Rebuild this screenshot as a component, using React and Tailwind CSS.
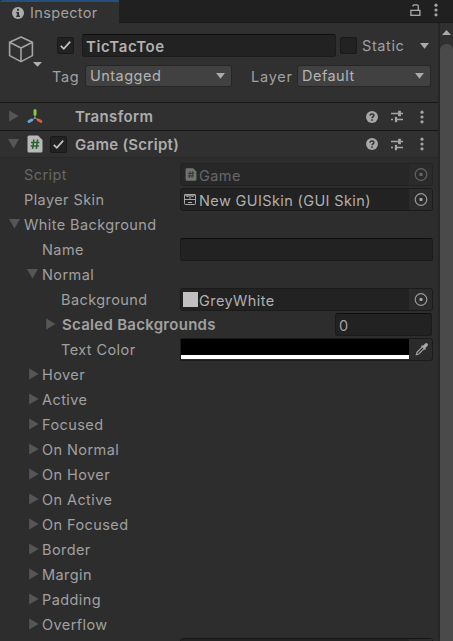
const Right = ({ className = "text-[#565656]" }) => (
  <svg className={`block h-[12px] w-[10px] shrink-0 ${className}`} viewBox="0 0 10 12">
    <path d="M0.2 0.6 L9.6 6 L0.2 11.4Z" fill="currentColor" />
  </svg>
);

const Down = ({ className = "h-[10px] w-[11px] text-[#565656]" }) => (
  <svg className={`block shrink-0 ${className}`} viewBox="0 0 10 10" preserveAspectRatio="none">
    <path d="M0 0 H10 L5 9.5Z" fill="currentColor" />
  </svg>
);

const Kebab = ({ className = "" }) => (
  <svg className={`block h-[14px] w-[4px] shrink-0 ${className}`} viewBox="0 0 4 14" fill="#a4a4a4">
    <circle cx="2" cy="2.2" r="1.6" />
    <circle cx="2" cy="7" r="1.6" />
    <circle cx="2" cy="11.8" r="1.6" />
  </svg>
);

const Check = ({ checked }) => (
  <span className="flex size-[17px] shrink-0 items-center justify-center rounded-[2px] border border-[#191919] bg-[#222222]">
    {checked && (
      <svg className="block size-[15px]" viewBox="0 0 15 15">
        <path d="M2.8 7.8 L5.8 10.8 L12.2 3.6" fill="none" stroke="#c4c4c4" strokeWidth="1.7" />
      </svg>
    )}
  </span>
);

const Target = () => (
  <span className="flex h-full w-[23px] shrink-0 items-center justify-center rounded-r-[2px] bg-[#2b2b2b]">
    <svg className="block size-[14px]" viewBox="0 0 14 14">
      <circle cx="7" cy="6.5" r="5.8" fill="none" stroke="#999" strokeWidth="1.2" />
      <rect x="5.5" y="5" width="3" height="3" rx="0.8" fill="#a8a8a8" />
    </svg>
  </span>
);

const ScriptIcon = ({ className }) => (
  <svg className={`block shrink-0 ${className}`} viewBox="0 0 16 18">
    <path d="M2 0.5 H11 L15.5 5 V16 Q15.5 17.5 14 17.5 H2 Q0.5 17.5 0.5 16 V2 Q0.5 0.5 2 0.5Z" fill="#b8b8b8" />
    <path d="M6.9 4.4 L5.6 13.8 M10.6 4.4 L9.3 13.8 M4 7.4 H12.4 M3.6 10.9 H12" stroke="#2c6130" strokeWidth="1.5" fill="none" />
  </svg>
);

const SkinIcon = () => (
  <svg className="block h-[13px] w-[12px] shrink-0" viewBox="0 0 12 13" fill="none" stroke="#a8a8a8" strokeWidth="1">
    <rect x="0.5" y="1.5" width="11" height="10" rx="0.8" />
    <path d="M0.5 6.5 H11.5 M4 9.5 H8" />
    <path d="M2.5 3.5 H4.5 M7.5 3.5 H9.5" />
    <path d="M6 1.5 V6.5" />
    <path d="M0.5 2 H11.5" strokeWidth="1.4" />
  </svg>
);

const Axes = () => (
  <svg className="block size-[18px] shrink-0" viewBox="0 0 18 18" strokeLinecap="round" strokeWidth="3">
    <path d="M9 2.6 V6.2" stroke="#8cc63c" />
    <path d="M5.6 12 L3 13.5" stroke="#5eaed2" />
    <path d="M12.4 12 L15 13.5" stroke="#dc5a2c" />
    <path d="M9 7.4 V10 L6.4 11.6 M9 10 L11.8 11.6" stroke="#a0a0a0" strokeWidth="1" fill="none" />
  </svg>
);

const HeaderTools = () => (
  <span className="ml-auto flex items-center pr-[14px]">
    <span className="flex size-[12px] items-center justify-center rounded-full bg-[#a6a6a6]">
      <svg className="block size-[12px]" viewBox="0 0 12 12">
        <path d="M4.1 4.8 Q4.1 3 6 3 Q7.9 3 7.9 4.6 Q7.9 5.5 6.8 6 Q6 6.4 6 7.2" fill="none" stroke="#303030" strokeWidth="1.4" />
        <rect x="5.2" y="8.3" width="1.6" height="1.5" fill="#303030" />
      </svg>
    </span>
    <svg className="ml-[13px] block h-[13px] w-[12px]" viewBox="0 0 12 13" stroke="#a6a6a6" fill="none">
      <path d="M0 3.5 H7 M10 3.5 H12 M0 9.5 H2 M5 9.5 H12" strokeWidth="1.3" />
      <path d="M8.5 0.8 V6.2" strokeWidth="2.8" />
      <path d="M5 6.9 V12.2" strokeWidth="2.2" />
    </svg>
    <Kebab className="ml-[17px]" />
  </span>
);

const Label = ({ children, className = "" }) => (
  <span className={`whitespace-nowrap text-[14.5px] leading-[23px] tracking-[0.42px] text-[#a0a0a0] ${className}`}>{children}</span>
);

const Row = ({ indent, arrow, label, bold, children }) => (
  <div className="flex h-[25px]">
    <div className={`flex h-[23px] w-[180px] shrink-0 items-center ${indent}`}>
      <span className="flex w-[14px] shrink-0 items-center pb-px">
        {arrow === "down" && <Down className="-ml-px h-[10px] w-[11px] text-[#565656]" />}
        {arrow === "right" && <Right className="ml-px text-[#565656]" />}
      </span>
      <Label className={bold ? "pl-[3px] font-semibold !text-[15px] !tracking-[0.28px]" : ""}>{label}</Label>
    </div>
    {children}
  </div>
);

const ObjectField = ({ children }) => (
  <div className="flex h-[23px] w-[253px] items-center rounded-[3px] border border-[#1b1b1b] bg-[#222222] pl-[2px]">
    {children}
    <span className="ml-auto h-full"><Target /></span>
  </div>
);

const Dropdown = ({ children, className }) => (
  <div className={`flex h-[22px] items-center rounded-[3px] border border-[#262626] bg-[#414141] pl-[4px] pr-[6px] ${className}`}>
    <span className="pb-px text-[14.5px] leading-[19px] tracking-[0.48px] text-[#b4b4b4]">{children}</span>
    <Down className="ml-auto h-[6px] w-[9px] text-[#aaaaaa]" />
  </div>
);

const closed = ["Hover", "Active", "Focused", "On Normal", "On Hover", "On Active", "On Focused", "Border", "Margin", "Padding", "Overflow"];

export default function App() {
  return (
    <div className="flex h-[641px] w-[453px] flex-col overflow-hidden bg-[#2d2d2d] font-['Inter',sans-serif]">
      <div className="flex h-[23px] shrink-0 bg-[#202020]">
        <div className="flex w-[119px] items-center rounded-tl-[2px] border-t-2 border-[#26507c] bg-[#303030] pl-[12px]">
          <svg className="block size-[12px]" viewBox="0 0 12 12">
            <circle cx="6" cy="6" r="6" fill="#acacac" />
            <path d="M5 1.8 H7 V3.7 H5Z M4.2 4.9 H7 V8.6 H8 V10 H4.2 V8.6 H5.1 V6.2 H4.2Z" fill="#303030" />
          </svg>
          <span className="ml-[6px] text-[14.5px] leading-[20px] tracking-[0.35px] text-[#a0a0a0]">Inspector</span>
        </div>
        <div className="flex flex-1 items-start justify-end border-b border-[#191919] pr-[15px] pt-[3px]">
          <svg className="mr-[13px] mt-px block h-[12px] w-[11px]" viewBox="0 0 11 12" fill="none" stroke="#acacac" strokeWidth="1.3">
            <rect x="0.9" y="6.4" width="9" height="4.9" />
            <path d="M3 2.4 V2 Q3 0.9 4.1 0.9 H7 Q8.3 0.9 8.3 2.2 V6" />
          </svg>
          <Kebab />
        </div>
      </div>
      <div className="flex min-h-0 flex-1">
        <div className="flex w-[438px] shrink-0 flex-col">
          <div className="flex h-[79px] shrink-0 bg-[#303030]">
            <div className="flex w-[57px] shrink-0 items-start pl-[8px] pt-[13px]">
              <svg className="block h-[27px] w-[26px]" viewBox="0 0 26 27" fill="none" stroke="#a4a4a4" strokeWidth="1.6" strokeLinejoin="round">
                <path d="M13 1 L24.4 6.2 V19.6 L13 25.6 L1.6 19.6 V6.2Z M1.6 6.2 L13 12 L24.4 6.2 M13 12 V25.6" />
              </svg>
              <Down className="-ml-px mt-[26px] h-[5px] w-[9px] text-[#b0b0b0]" />
            </div>
            <div className="flex flex-1 flex-col pt-[11px]">
              <div className="flex h-[23px] items-center">
                <Check checked />
                <div className="ml-[8px] flex h-[23px] w-[254px] items-center rounded-[3px] border border-[#1c1c1c] border-t-[#0f0f0f] bg-[#222222] pl-[3px]">
                  <span className="pt-[2px] text-[15px] font-semibold leading-[21px] tracking-[0.64px] text-[#b0b0b0]">TicTacToe</span>
                </div>
                <span className="ml-[4px]"><Check /></span>
                <Label className="ml-[5px] !tracking-[0.6px]">Static</Label>
                <Down className="ml-auto mr-[9px] h-[6px] w-[9px] text-[#aaaaaa]" />
              </div>
              <div className="-ml-[4px] mt-[8px] flex h-[22px] items-center">
                <Label className="-ml-px w-[33px] !tracking-[0.7px]">Tag</Label>
                <Dropdown className="w-[147px]">Untagged</Dropdown>
                <Label className="ml-[19px] w-[46px] !tracking-[0.75px]">Layer</Label>
                <Dropdown className="w-[134px]">Default</Dropdown>
              </div>
            </div>
          </div>
          <div className="flex h-[28px] shrink-0 items-center border-t border-[#181818] bg-[#303030] pl-[9px]">
            <Right className="mb-px text-[#565656]" />
            <span className="ml-[7px]"><Axes /></span>
            <Label className="ml-[31px] font-semibold !text-[15px] !tracking-[0.35px] !text-[#acacac]">Transform</Label>
            <HeaderTools />
          </div>
          <div className="flex h-[28px] shrink-0 items-center border-y border-b-[#282828] border-t-[#181818] bg-[#303030] pl-[8px]">
            <Down />
            <ScriptIcon className="ml-[8px] h-[18px] w-[16px]" />
            <span className="ml-[7px]"><Check checked /></span>
            <Label className="ml-[8px] pt-px font-semibold !text-[15px] !tracking-[0.28px] !text-[#acacac]">Game (Script)</Label>
            <HeaderTools />
          </div>
          <div className="flex flex-col pt-[5px]">
            <div className="opacity-50">
              <Row indent="pl-[10px]" label="Script">
                <ObjectField>
                  <ScriptIcon className="ml-[2px] h-[13px] w-[12px]" />
                  <Label className="ml-[2px] pt-[2px]">Game</Label>
                </ObjectField>
              </Row>
            </div>
            <Row indent="pl-[10px]" label="Player Skin">
              <ObjectField>
                <span className="ml-px"><SkinIcon /></span>
                <Label className="ml-[3px] pt-[2px] !tracking-[0.38px] !text-[#b0b0b0]">New GUISkin (GUI Skin)</Label>
              </ObjectField>
            </Row>
            <Row indent="pl-[10px]" arrow="down" label="White Background" />
            <Row indent="pl-[28px]" label="Name">
              <div className="h-[23px] w-[253px] rounded-[3px] border border-[#1b1b1b] border-t-[#0f0f0f] bg-[#222222]" />
            </Row>
            <Row indent="pl-[28px]" arrow="down" label="Normal" />
            <Row indent="pl-[47px]" label="Background">
              <ObjectField>
                <span className="size-[15px] bg-[#c0c0c0]" />
                <Label className="ml-px pt-[2px] !text-[#b0b0b0]">GreyWhite</Label>
              </ObjectField>
            </Row>
            <Row indent="pl-[45px]" arrow="right" bold label="Scaled Backgrounds">
              <div className="ml-[155px] flex h-[23px] w-[97px] items-center rounded-[3px] border border-[#1b1b1b] border-t-[#0f0f0f] bg-[#222222] pl-[3px]">
                <Label className="pt-[2px]">0</Label>
              </div>
            </Row>
            <Row indent="pl-[47px]" label="Text Color">
              <div className="flex h-[23px] w-[253px] rounded-r-[3px] border border-[#1b1b1b] bg-[#2b2b2b]">
                <div className="flex h-[20px] w-[228px] flex-col bg-black">
                  <div className="mt-auto h-[4px] bg-white" />
                </div>
                <svg className="ml-[5px] mt-[3px] block size-[15px]" viewBox="0 0 15 15">
                  <path d="M8.2 5.2 L3 10.4 L2.4 12.7 L4.7 12 L9.9 6.8" fill="none" stroke="#a4a4a4" strokeWidth="1.2" />
                  <path d="M9 3.8 L11.2 1.6 Q12.4 0.6 13.5 1.7 Q14.5 2.7 13.5 3.9 L11.3 6 L12 6.9 L10.9 8 L7 4.2 L8.1 3Z" fill="#a8a8a8" />
                </svg>
              </div>
            </Row>
            {closed.map((name) => (
              <Row key={name} indent="pl-[28px]" arrow="right" label={name} />
            ))}
            <div className="ml-[180px] flex h-[23px] w-[253px] shrink-0 justify-end rounded-[3px] border border-[#171717] bg-[#222222]">
              <div className="w-[23px] bg-[#2b2b2b]" />
            </div>
          </div>
        </div>
        <div className="flex flex-1 flex-col border-l-2 border-[#262626] bg-[#303030]">
          <svg className="ml-[2px] mt-[7px] block h-[5px] w-[9px] shrink-0" viewBox="0 0 9 5">
            <path d="M0 5 L4.5 0 L9 5Z" fill="#aaaaaa" />
          </svg>
          <div className="mt-[9px] flex-1 rounded-t-[6px] bg-[#4a4a4a]" />
        </div>
      </div>
    </div>
  );
}
